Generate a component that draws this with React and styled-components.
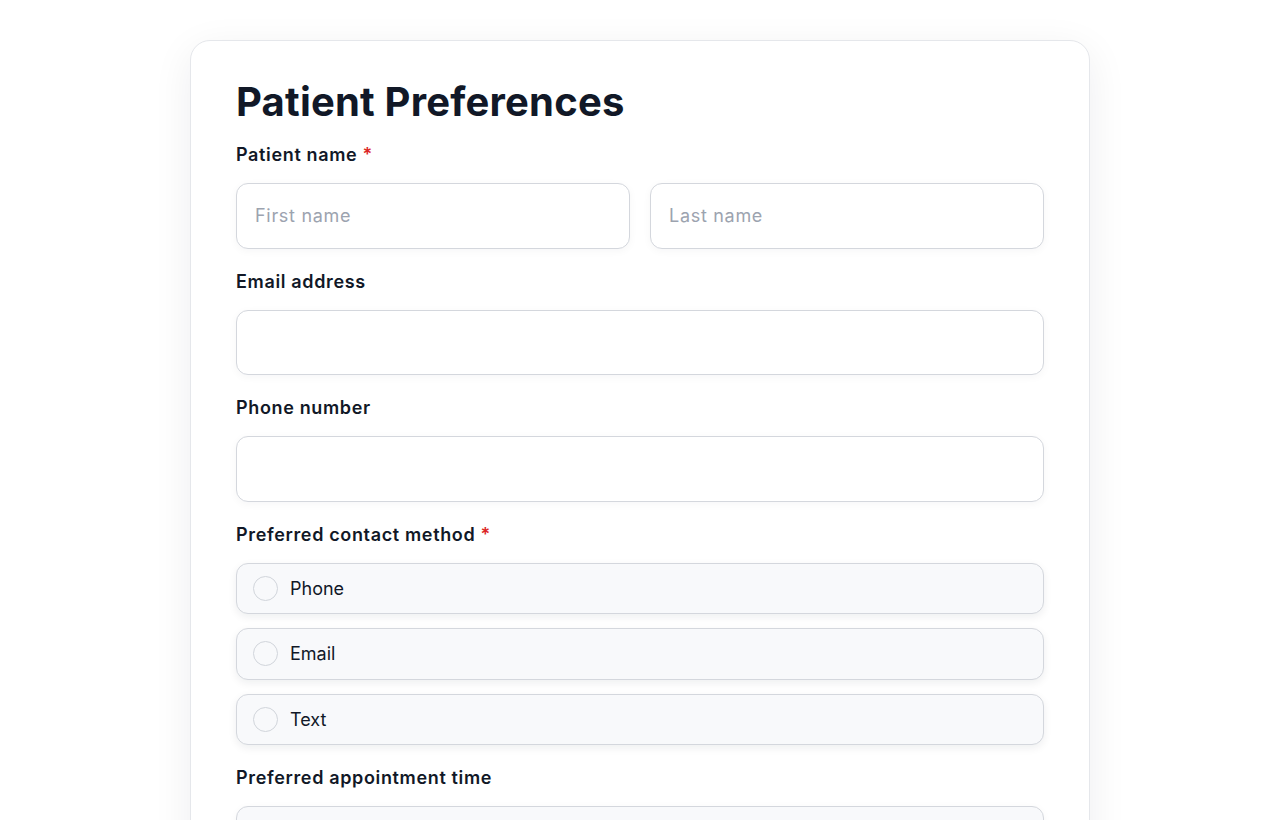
import React from "react";
import styled, { createGlobalStyle } from "styled-components";

const Global = createGlobalStyle`
  html, body { margin: 0; padding: 0; background: #ffffff; }
  body { font-family: Inter, "Noto Sans", sans-serif; color: #111827; -webkit-font-smoothing: antialiased; }
  * { box-sizing: border-box; }
`;

const Page = styled.div`
  display: flex;
  justify-content: center;
  padding-top: 40px;
  min-height: 820px;
`;

const Card = styled.form`
  width: 900px;
  background: #ffffff;
  border: 1px solid #e5e7eb;
  border-radius: 20px;
  box-shadow: 0 10px 40px rgba(17, 24, 39, 0.07);
  padding: 37px 45px 48px;
  display: flex;
  flex-direction: column;
  gap: 21px;
`;

const Title = styled.h1`
  margin: 0 0 -4px;
  font-size: 40px;
  line-height: 48px;
  font-weight: 700;
  color: #111827;
  letter-spacing: 0.2px;
`;

const Field = styled.div`
  display: flex;
  flex-direction: column;
  gap: 16px;
`;

const Label = styled.label`
  font-size: 18px;
  line-height: 24px;
  font-weight: 600;
  color: #111827;
  letter-spacing: 0.65px;
`;

const Req = styled.span`
  color: #dc2626;
  margin-left: 5px;
`;

const Row = styled.div`
  display: grid;
  grid-template-columns: 1fr 1fr;
  gap: 20px;
`;

const Input = styled.input`
  height: 65.5px;
  width: 100%;
  border: 1px solid #d4d7dd;
  border-radius: 12px;
  padding: 0 18px;
  font-family: inherit;
  font-size: 18px;
  letter-spacing: 0.7px;
  color: #111827;
  background: #ffffff;
  box-shadow: 0 2px 8px rgba(17, 24, 39, 0.04);
  outline: none;
  &::placeholder { color: #9ca3af; }
`;

const Options = styled.div`
  display: flex;
  flex-direction: column;
  gap: 14px;
`;

const Option = styled.label`
  height: 51.5px;
  display: flex;
  align-items: center;
  gap: 12px;
  padding: 0 16px;
  border: 1px solid #d4d7dd;
  border-radius: 12px;
  background: #f8f9fb;
  box-shadow: 0 3px 8px rgba(17, 24, 39, 0.07);
  font-size: 18px;
  color: #111827;
  cursor: pointer;
`;

const Radio = styled.span`
  width: 25px;
  height: 25px;
  border-radius: 50%;
  border: 1px solid #d1d5db;
  background: #f8f9fb;
  flex: none;
`;

const Select = styled.div`
  height: 65.5px;
  border: 1px solid #d4d7dd;
  border-radius: 12px;
  background: #f8f9fb;
  box-shadow: 0 2px 8px rgba(17, 24, 39, 0.04);
`;

export default function App() {
  return (
    <>
      <Global />
      <Page>
        <Card onSubmit={(e) => e.preventDefault()}>
          <Title>Patient Preferences</Title>
          <Field>
            <Label>
              Patient name<Req>*</Req>
            </Label>
            <Row>
              <Input placeholder="First name" />
              <Input placeholder="Last name" />
            </Row>
          </Field>
          <Field>
            <Label>Email address</Label>
            <Input type="email" />
          </Field>
          <Field>
            <Label>Phone number</Label>
            <Input type="tel" />
          </Field>
          <Field>
            <Label>
              Preferred contact method<Req>*</Req>
            </Label>
            <Options>
              {["Phone", "Email", "Text"].map((o) => (
                <Option key={o}>
                  <Radio />
                  {o}
                </Option>
              ))}
            </Options>
          </Field>
          <Field>
            <Label>Preferred appointment time</Label>
            <Select />
          </Field>
        </Card>
      </Page>
    </>
  );
}
